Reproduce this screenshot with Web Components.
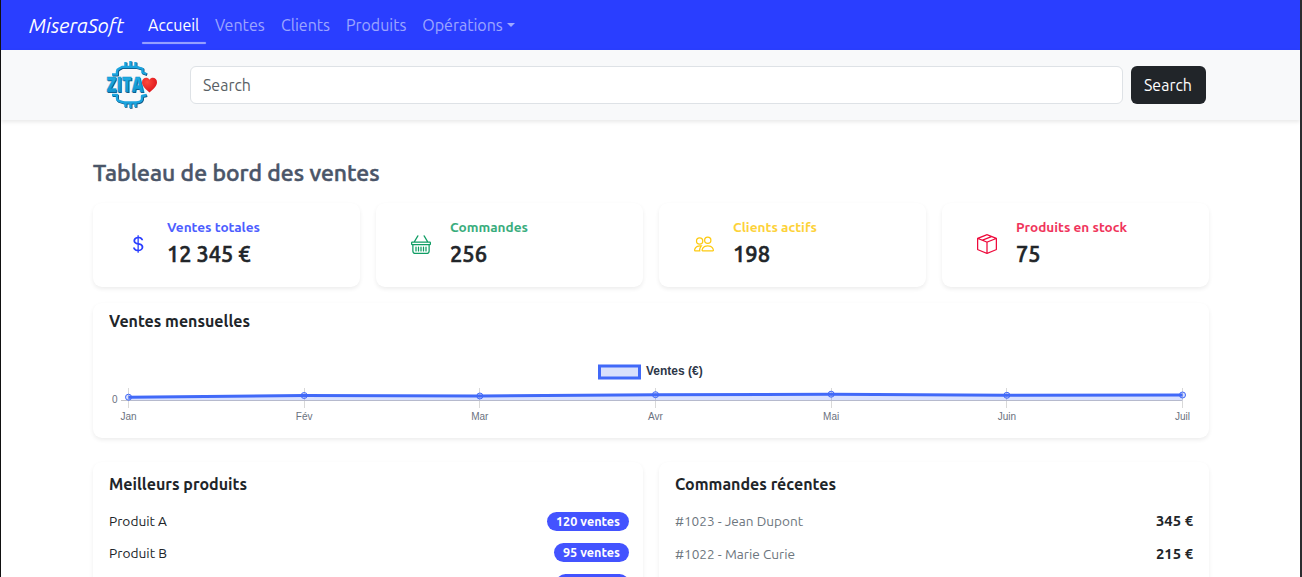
<!DOCTYPE html>
<html lang="fr">
<head>
<meta charset="utf-8">
<title>MiseraSoft</title>
<style>
html,body{margin:0;height:577px;overflow:hidden}
body{font-family:Ubuntu,"Noto Sans","Open Sans",sans-serif;color:#212529;background:#fff}
</style>
</head>
<body>
<sales-app></sales-app>
<script>
const define = (name, html, init) => {
  const tpl = document.createElement('template');
  tpl.innerHTML = html;
  customElements.define(name, class extends HTMLElement {
    connectedCallback() {
      if (this.shadowRoot) return;
      this.attachShadow({mode: 'open'}).append(tpl.content.cloneNode(true));
      if (init) init.call(this, this.shadowRoot);
    }
  });
};

// Text run condensed or widened to a set advance width.
define('fit-text', `
<style>
:host{display:inline-block;white-space:nowrap;flex:none}
span{display:inline-block;transform-origin:0 50%}
</style><span><slot></slot></span>`, function (root) {
  const w = +this.getAttribute('w'), s = root.querySelector('span');
  const n = s.getBoundingClientRect().width;
  this.style.width = w + 'px';
  if (n) s.style.transform = `scaleX(${w / n})`;
});

define('nav-item', `
<style>
:host{display:flex;align-items:center;padding:0 8px;height:50px;font-size:16px;color:rgba(255,255,255,.55);position:relative}
:host([active]){color:#fff}
:host([active])::after{content:"";position:absolute;left:2px;right:1px;top:42px;height:2px;border-radius:1px;background:rgba(255,255,255,.5);box-shadow:0 0 1px rgba(255,255,255,.4)}
i{display:none;margin-left:4px;border:4px solid transparent;border-top-color:currentColor;border-bottom:0}
:host([menu]) i{display:block}
</style><slot></slot><i></i>`);

define('nav-bar', `
<style>
:host{display:flex;height:50px;background:#2a3eff;padding-left:28px;box-sizing:border-box;align-items:center}
.brand{font-size:20px;font-style:italic;color:#fff;margin-right:16px}
</style>
<div class="brand"><fit-text w="95">MiseraSoft</fit-text></div>
<nav-item active><fit-text w="51.3">Accueil</fit-text></nav-item>
<nav-item><fit-text w="49.7">Ventes</fit-text></nav-item>
<nav-item><fit-text w="49">Clients</fit-text></nav-item>
<nav-item><fit-text w="60.3">Produits</fit-text></nav-item>
<nav-item menu><fit-text w="80.5">Opérations</fit-text></nav-item>`);

define('zita-logo', `
<style>:host{display:block;width:52px;height:50px}svg{display:block}</style>
<svg width="52" height="50" viewBox="0 0 52 50">
<defs>
<linearGradient id="b" x1="0" y1="0" x2="0" y2="1"><stop offset="0" stop-color="#22b6ea"/><stop offset="1" stop-color="#0f8cc8"/></linearGradient>
<radialGradient id="r" cx=".35" cy=".3" r=".8"><stop offset="0" stop-color="#ff4a3c"/><stop offset="1" stop-color="#d80f18"/></radialGradient>
</defs>
<g fill="none" stroke-linejoin="round">
<g stroke="#0b4f7c" stroke-width="2.6" transform="translate(.7 .7)">
<path d="M6 14.500h5V11.500q0-2 2-2.800l3-1.700h14.500l6 1.800V12.500l4 1.500M19.500 8V2M24.500 8V1M29.500 8V2"/>
<path d="M6 35h5V38.500q0 2 3 2.800l4 1.200h12q6-.3 6-4V36l4.500-1M19.500 42v5M24.500 42v6M29.500 42v5"/></g>
<g stroke="#1ba4de" stroke-width="2.400">
<path d="M6 14.500h5V11.500q0-2 2-2.800l3-1.700h14.500l6 1.800V12.500l4 1.500M19.500 8V2M24.500 8V1M29.500 8V2"/>
<path d="M6 35h5V38.500q0 2 3 2.800l4 1.200h12q6-.3 6-4V36l4.500-1M19.500 42v5M24.500 42v6M29.500 42v5"/></g></g>
<text x="1.300" y="32.700" textLength="37" lengthAdjust="spacingAndGlyphs" font-family="Open Sans,Noto Sans,sans-serif" font-weight="800" font-size="21" fill="#0b4f7c">ZITA</text>
<text x=".5" y="32.200" textLength="37" lengthAdjust="spacingAndGlyphs" font-family="Open Sans,Noto Sans,sans-serif" font-weight="800" font-size="21" fill="url(#b)" stroke="#118fcb" stroke-width=".5">ZITA</text>
<path d="M43.500 32.500C39 28.500 36 25.500 36 22.200c0-4.800 5.500-6 7.500-2.500 2-3.500 7.500-2.300 7.500 2.500 0 3.300-3 6.300-7.500 10.300z" fill="url(#r)"/>
</svg>`);

define('search-bar', `
<style>
:host{display:flex;height:70px;box-sizing:border-box;background:#f8f9fa;align-items:center;padding:0 94px 0 105px;box-shadow:0 2px 4px rgba(0,0,0,.09);font-size:16px;position:relative}
.in{flex:1;height:38px;box-sizing:border-box;margin:0 8px 0 32px;border:1px solid #dee2e6;border-radius:6px;background:#fff;color:#595f65;display:flex;align-items:center;padding-left:12px}
.btn{width:75px;height:38px;box-sizing:border-box;border-radius:6px;background:#212529;color:#fff;display:flex;align-items:center;padding-left:13px}
</style>
<zita-logo></zita-logo>
<div class="in"><fit-text w="48">Search</fit-text></div>
<div class="btn"><fit-text w="48">Search</fit-text></div>`);

define('ui-card', `
<style>:host{display:block;box-sizing:border-box;background:#fff;border-radius:9px;box-shadow:0 2px 4px rgba(0,0,0,.075)}</style><slot></slot>`);

const icons = {
  dollar: 'M4 10.781c.148 1.667 1.513 2.85 3.591 3.003V15h1.043v-1.216c2.27-.179 3.678-1.438 3.678-3.3 0-1.59-.947-2.51-2.956-3.028l-.722-.187V3.467c1.122.11 1.879.714 2.07 1.616h1.47c-.166-1.6-1.54-2.748-3.54-2.875V1H7.591v1.233c-1.939.23-3.27 1.472-3.27 3.156 0 1.454.966 2.483 2.661 2.917l.61.162v4.031c-1.149-.17-1.94-.8-2.131-1.718zm3.391-3.836c-1.043-.263-1.6-.825-1.6-1.616 0-.944.704-1.641 1.8-1.828v3.495l-.2-.05zm1.591 1.872c1.287.323 1.852.859 1.852 1.769 0 1.097-.826 1.828-2.2 1.939V8.73z',
  basket: 'M5.757 1.071a.5.5 0 0 1 .172.686L3.383 6h9.234L10.07 1.757a.5.5 0 1 1 .858-.514L13.783 6H15a1 1 0 0 1 1 1v1a1 1 0 0 1-1 1v4.500a2.500 2.500 0 0 1-2.500 2.500h-9A2.500 2.500 0 0 1 1 13.500V9a1 1 0 0 1-1-1V7a1 1 0 0 1 1-1h1.217L5.070 1.243a.5.5 0 0 1 .686-.172zM2 9v4.500A1.500 1.500 0 0 0 3.500 15h9a1.500 1.500 0 0 0 1.500-1.500V9zM1 7v1h14V7zM3.500 10.500a.5.5 0 0 1 1 0v3a.5.5 0 0 1-1 0zm2 0a.5.5 0 0 1 1 0v3a.5.5 0 0 1-1 0zm2 0a.5.5 0 0 1 1 0v3a.5.5 0 0 1-1 0zm2 0a.5.5 0 0 1 1 0v3a.5.5 0 0 1-1 0zm2 0a.5.5 0 0 1 1 0v3a.5.5 0 0 1-1 0z',
  people: 'M15 14s1 0 1-1-1-4-5-4-5 3-5 4 1 1 1 1zm-7.978-1L7 12.996c.001-.264.167-1.030.76-1.720C8.312 10.629 9.282 10 11 10c1.717 0 2.687.63 3.240 1.276.593.69.758 1.457.76 1.720l-.008.002-.014.002zM11 7a2 2 0 1 0 0-4 2 2 0 0 0 0 4m3-2a3 3 0 1 1-6 0 3 3 0 0 1 6 0M6.936 9.280a6 6 0 0 0-1.230-.247A7 7 0 0 0 5 9c-4 0-5 3-5 4q0 1 1 1h4.216A2.240 2.240 0 0 1 5 13c0-1.010.377-2.042 1.090-2.904.243-.294.526-.569.846-.816M4.920 10A5.500 5.500 0 0 0 4 13H1c0-.26.164-1.030.76-1.724.545-.636 1.492-1.256 3.160-1.275ZM1.500 5.500a3 3 0 1 1 6 0 3 3 0 0 1-6 0m3-2a2 2 0 1 0 0 4 2 2 0 0 0 0-4',
  box: 'M8.186 1.113a.5.5 0 0 0-.372 0L1.846 3.500l2.404.961L10.404 2zm3.564 1.426L5.596 5 8 5.961 14.154 3.500zm3.250 1.700-6.500 2.600v7.922l6.500-2.600V4.240zM7.500 14.762V6.838L1 4.239v7.923zM7.443.184a1.500 1.500 0 0 1 1.114 0l7.129 2.852A.5.5 0 0 1 16 3.500v8.662a1 1 0 0 1-.629.928l-7.185 2.874a.5.5 0 0 1-.372 0L.63 13.090a1 1 0 0 1-.63-.928V3.500a.5.5 0 0 1 .314-.464z'
};

define('stat-card', `
<style>
:host{display:block}
ui-card{height:84px;display:flex;padding:0 16px 0 35px}
svg{display:block;margin:31px 19px 0 0;flex:none}
.t{padding-top:15px}
.l{font-size:13px;font-weight:600;line-height:19px;height:19px;opacity:.83}
.v{font-size:22px;font-weight:500;-webkit-text-stroke:.6px;line-height:26px;margin-top:4px;color:#212529}
</style>
<ui-card><svg width="20" height="20" viewBox="0 0 16 16" fill="currentColor"><path fill-rule="evenodd"/></svg>
<div class="t"><div class="l"><slot name="label"></slot></div><div class="v"><slot name="value"></slot></div></div></ui-card>`, function (root) {
  root.querySelector('path').setAttribute('d', icons[this.getAttribute('icon')]);
});

define('sales-chart', `
<style>
:host{display:block;height:74px}
svg{display:block;overflow:visible}
</style>
<svg width="1116" height="74" viewBox="93 354 1116 74" font-family="Liberation Sans,Arial,sans-serif">
<rect x="599.500" y="366" width="40" height="12" fill="#d9e0fc" stroke="#4169f8" stroke-width="3"/>
<text x="646" y="375" font-size="12" font-weight="700" fill="#2d3748">Ventes (€)</text>
<g id="grid" stroke="#d9d9d9"></g>
<path d="M121 400.500H1182" stroke="#c4c4c8"/>
<path id="area" fill="#4169f8" fill-opacity=".2"/>
<path id="line" fill="none" stroke="#4169f8" stroke-width="3" stroke-linejoin="round"/>
<g id="pts" fill="#4169f8" fill-opacity=".2" stroke="#4169f8"></g>
<g id="lab" font-size="10" fill="#6b7280" text-anchor="middle"><text x="114.800" y="403">0</text></g>
</svg>`, function (root) {
  const names = ['Jan', 'Fév', 'Mar', 'Avr', 'Mai', 'Juin', 'Juil'];
  const ys = [397.200, 395.500, 396, 394.700, 394.200, 395.300, 395];
  const xs = names.map((_, i) => 128.500 + i * 175.670);
  const ns = 'http://www.w3.org/2000/svg';
  const add = (id, tag, at, text) => {
    const e = document.createElementNS(ns, tag);
    for (const k in at) e.setAttribute(k, at[k]);
    if (text) e.textContent = text;
    root.getElementById(id).append(e);
  };
  names.forEach((n, i) => {
    const x = Math.floor(xs[i]) + .5;
    add('grid', 'path', {d: `M${x} 388V408`});
    add('pts', 'circle', {cx: xs[i], cy: ys[i], r: 3});
    add('lab', 'text', {x: xs[i], y: 420}, n);
  });
  const d = 'M' + xs.map((x, i) => x + ' ' + ys[i]).join('L');
  root.getElementById('line').setAttribute('d', d);
  root.getElementById('area').setAttribute('d', d + `V400.500H${xs[0]}Z`);
});

define('card-title', `
<style>:host{display:block;font-size:16px;font-weight:600;line-height:22px;height:22px;color:#212529}</style><slot></slot>`);

define('product-row', `
<style>
:host{display:flex;justify-content:space-between;align-items:flex-start;height:32px;font-size:13px;line-height:20px}
b{height:19px;margin-top:.5px;border-radius:10px;background:#4353ff;color:#fff;font-size:12px;line-height:20px;font-weight:600;padding:0 9px}
:host(:nth-of-type(2)) b{margin-top:-.5px}
:host([blank]) b{margin:-1px 0 0 auto;width:55px}
</style><slot></slot><b><slot name="count"></slot></b>`);

define('order-row', `
<style>
:host{display:flex;justify-content:space-between;height:33px;font-size:13px;line-height:20px;color:#6c757d}
b{font-weight:600;color:#212529;font-size:14px}
</style><slot></slot><b><slot name="amount"></slot></b>`);

define('sales-app', `
<style>
:host{display:block;box-sizing:border-box;width:1302px;height:577px;overflow:hidden;border-left:1px solid #111;border-right:2px solid #2b2d30;background:#fff}
main{padding:38px 91px 0 92px}
h1{margin:0 0 0 -.5px;font-size:22px;font-weight:500;-webkit-text-stroke:.5px;line-height:30px;height:30px;color:#4a5568}
.stats{display:grid;grid-template-columns:repeat(4,267px);gap:16px;margin-top:15px}
.chart{height:135px;margin-top:16px;padding-top:7px}
.chart card-title{margin-left:15.500px;margin-bottom:22px}
.lists{display:grid;grid-template-columns:550px 550px;gap:16px;margin-top:24px}
.lists ui-card{height:180px;padding:11px 14px 0 15.500px}
.lists ui-card + ui-card{padding-right:16px}
.lists card-title{margin-bottom:16px}
</style>
<nav-bar></nav-bar>
<search-bar></search-bar>
<main>
<h1><fit-text w="286.500">Tableau de bord des ventes</fit-text></h1>
<div class="stats">
<stat-card icon="dollar" style="color:#2a3eff"><fit-text slot="label" w="93">Ventes totales</fit-text><fit-text slot="value" w="83.500">12 345 €</fit-text></stat-card>
<stat-card icon="basket" style="color:#0f9d64"><fit-text slot="label" w="78">Commandes</fit-text><fit-text slot="value" w="37">256</fit-text></stat-card>
<stat-card icon="people" style="color:#fdca10"><fit-text slot="label" w="84">Clients actifs</fit-text><fit-text slot="value" w="37">198</fit-text></stat-card>
<stat-card icon="box" style="color:#ee0b3c"><fit-text slot="label" w="111">Produits en stock</fit-text><fit-text slot="value" w="24.500">75</fit-text></stat-card>
</div>
<ui-card class="chart"><card-title><fit-text w="141">Ventes mensuelles</fit-text></card-title><sales-chart></sales-chart></ui-card>
<div class="lists">
<ui-card><card-title><fit-text w="138">Meilleurs produits</fit-text></card-title>
<product-row><fit-text w="58">Produit A</fit-text><fit-text slot="count" w="64">120 ventes</fit-text></product-row>
<product-row><fit-text w="58">Produit B</fit-text><fit-text slot="count" w="57">95 ventes</fit-text></product-row>
<product-row blank></product-row></ui-card>
<ui-card><card-title><fit-text w="161">Commandes récentes</fit-text></card-title>
<order-row><fit-text w="128">#1023 - Jean Dupont</fit-text><fit-text slot="amount" w="37">345 €</fit-text></order-row>
<order-row><fit-text w="120">#1022 - Marie Curie</fit-text><fit-text slot="amount" w="37">215 €</fit-text></order-row></ui-card>
</div>
</main>`);
</script>
</body>
</html>
